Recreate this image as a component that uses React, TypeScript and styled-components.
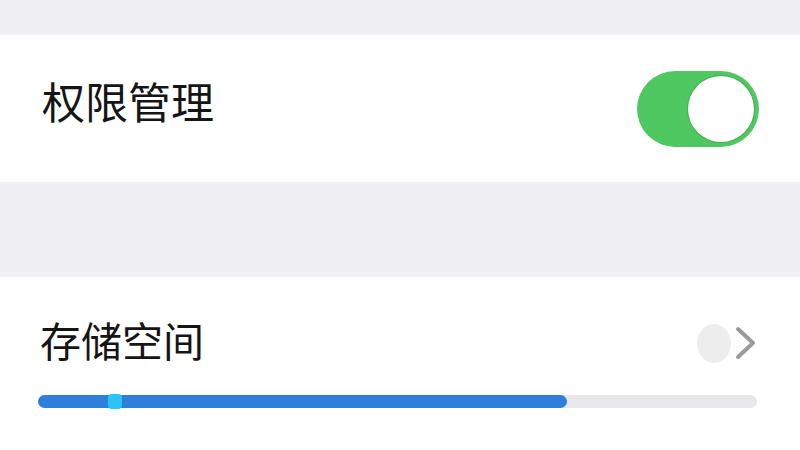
import React from 'react';
import styled, { createGlobalStyle } from "styled-components";

const GlobalStyle = createGlobalStyle`
  html, body {
    margin: 0;
    padding: 0;
    background: #efeff4;
    font-family: "Noto Sans CJK SC", "Noto Sans", sans-serif;
  }
`

const Page = styled.div`
    width: 800px;
    height: 450px;
    overflow: hidden;
    display: flex;
    flex-direction: column;
    background: #efeff4;
`

const TopGap = styled.div`
    height: 35px;
`

const Gap = styled.div`
    height: 95px;
`

const Row = styled.div`
    background: #ffffff;
    height: 147px;
    padding: 0 41px 0 42px;
    display: flex;
    align-items: center;
    justify-content: space-between;
`

const Label = styled.span<{ size: number }>`
    font-size: ${p => p.size}px;
    line-height: 50px;
    color: #151515;
    font-weight: 400;
`

const RowTitle = styled(Label)`
    margin-bottom: 17px;
`

const Switch = styled.div<{ on: boolean }>`
    width: 122px;
    height: 76px;
    border-radius: 38px;
    background: ${p => (p.on ? "#4fc862" : "#e5e5ea")};
    display: flex;
    align-items: center;
    justify-content: ${p => (p.on ? "flex-end" : "flex-start")};
    padding: 0 5px;
    box-sizing: border-box;
`

const Knob = styled.div`
    width: 66px;
    height: 66px;
    border-radius: 50%;
    background: #ffffff;
    box-shadow: 0 0 0 1px rgba(60, 140, 70, 0.45);
`

const StorageBlock = styled.div`
    background: #ffffff;
    flex: 1;
    padding: 37px 43px 0 38px;
    display: flex;
    flex-direction: column;
`

const StorageHead = styled.div`
    display: flex;
    align-items: center;
    justify-content: space-between;
    padding-left: 2px;
`

const Trail = styled.div`
    display: flex;
    align-items: center;
    gap: 4px;
    margin-top: 8px;
`

const Dot = styled.div`
    width: 34px;
    height: 39px;
    border-radius: 50%;
    background: #ededed;
`

const Bar = styled.div`
    margin-top: 31px;
    height: 13px;
    border-radius: 7px;
    background: #e8e8ea;
    position: relative;
`

const Fill = styled.div`
    height: 100%;
    border-radius: 7px;
    background: #2e7fd9;
    position: relative;
`

const Marker = styled.div`
    position: absolute;
    left: 70px;
    top: -1px;
    width: 14px;
    height: 15px;
    border-radius: 4px;
    background: #2bc3f3;
`

const Chevron = () => (
    <svg width="22" height="34" viewBox="0 0 22 34">
        <path d="M3 3 L18 17 L3 31" fill="none" stroke="#9a9a9a" strokeWidth="4" strokeLinecap="round" strokeLinejoin="round" />
    </svg>
)

export default function App() {
    const used = 529 / 719;
    return (
        <Page>
            <GlobalStyle />
            <TopGap />
            <Row>
                <RowTitle size={43}>权限管理</RowTitle>
                <Switch on={true}>
                    <Knob />
                </Switch>
            </Row>
            <Gap />
            <StorageBlock>
                <StorageHead>
                    <Label size={41}>存储空间</Label>
                    <Trail>
                        <Dot />
                        <Chevron />
                    </Trail>
                </StorageHead>
                <Bar>
                    <Fill style={{ width: `${used * 100}%` }}>
                        <Marker />
                    </Fill>
                </Bar>
            </StorageBlock>
        </Page>
    );
}
